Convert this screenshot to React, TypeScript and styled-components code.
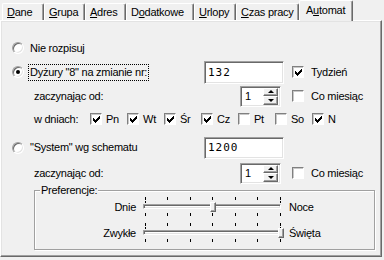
import React from 'react';
import styled, { createGlobalStyle } from 'styled-components';

const GlobalStyle = createGlobalStyle`
  html, body {
    margin: 0;
    padding: 0;
    background: #f0f0f0;
  }
  body {
    font-family: "Liberation Sans", Arial, sans-serif;
    font-size: 11px;
    letter-spacing: -0.25px;
    color: #000;
  }
`;

const Window = styled.div`
  width: 384px;
  height: 260px;
  background: #f0f0f0;
  overflow: hidden;
`;

const TabStrip = styled.div`
  display: flex;
  align-items: flex-end;
  height: 20px;
  padding-left: 2px;
  position: relative;
  z-index: 2;
`;

const Tab = styled.div<{ $w: number; $active?: boolean }>`
  box-sizing: border-box;
  width: ${p => p.$w}px;
  height: ${p => (p.$active ? 21 : 17)}px;
  margin-bottom: ${p => (p.$active ? -1 : 0)}px;
  padding: ${p => (p.$active ? '3px 0 0 6px' : '2px 0 0 4px')};
  background: #f0f0f0;
  border-top: 1px solid #fff;
  border-left: 1px solid #fff;
  border-right: 1px solid #696969;
  box-shadow: inset -1px 0 #a0a0a0;
  border-radius: 2px 2px 0 0;
  white-space: nowrap;

  u {
    text-decoration: underline;
    text-underline-offset: 1px;
  }
`;

const Page = styled.div`
  box-sizing: border-box;
  width: 382px;
  height: 237px;
  border: 1px solid;
  border-color: #fff #696969 #696969 #fff;
  box-shadow: inset -1px -1px #a0a0a0, inset 1px 1px #e3e3e3;
  padding: 15px 0 0 11px;
  display: flex;
  flex-direction: column;
`;

const Row = styled.div<{ $h: number; $mt?: number }>`
  display: flex;
  align-items: center;
  height: ${p => p.$h}px;
  margin-top: ${p => p.$mt ?? 0}px;
`;

const RadioOption = styled.div<{ $w: number }>`
  display: flex;
  align-items: center;
  width: ${p => p.$w}px;
`;

const RadioCircle = styled.span<{ $on?: boolean }>`
  box-sizing: border-box;
  width: 12px;
  height: 12px;
  border-radius: 50%;
  border: 1px solid;
  border-color: #a0a0a0 #fff #fff #a0a0a0;
  box-shadow: inset 1px 1px #696969, inset -1px -1px #e3e3e3;
  background: #fff;
  display: flex;
  align-items: center;
  justify-content: center;

  &::after {
    content: '';
    display: ${p => (p.$on ? 'block' : 'none')};
    width: 4px;
    height: 4px;
    border-radius: 50%;
    background: #000;
  }
`;

const OptionText = styled.span<{ $focus?: boolean }>`
  margin-left: 4px;
  padding: 1px 1px 2px;
  border: 1px dotted ${p => (p.$focus ? '#000' : 'transparent')};
  line-height: 12px;
  white-space: nowrap;
`;

const IndentLabel = styled.span<{ $w: number }>`
  margin-left: 22px;
  width: ${p => p.$w}px;
  white-space: nowrap;
`;

const TextField = styled.div<{ $h: number }>`
  box-sizing: border-box;
  width: 80px;
  height: ${p => p.$h}px;
  background: #fff;
  border: 1px solid;
  border-color: #a0a0a0 #fff #fff #a0a0a0;
  box-shadow: inset 1px 1px #696969, inset -1px -1px #e3e3e3;
  padding-left: 3px;
  display: flex;
  align-items: center;
  font-family: "DejaVu Sans Mono", "Liberation Mono", monospace;
  font-size: 11px;
  letter-spacing: 1px;
`;

const Spin = styled.div`
  box-sizing: border-box;
  width: 41px;
  height: 21px;
  background: #fff;
  border: 1px solid;
  border-color: #a0a0a0 #fff #fff #a0a0a0;
  box-shadow: inset 1px 1px #696969, inset -1px -1px #e3e3e3;
  display: flex;
  align-items: center;
  justify-content: space-between;
  padding: 2px 2px 2px 4px;
`;

const SpinButtons = styled.div`
  display: flex;
  flex-direction: column;
  width: 15px;
  height: 17px;
`;

const SpinButton = styled.div<{ $down?: boolean }>`
  flex: 1;
  box-sizing: border-box;
  background: #f0f0f0;
  border: 1px solid;
  border-color: #fff #696969 #696969 #fff;
  box-shadow: inset -1px -1px #a0a0a0;
  display: flex;
  align-items: center;
  justify-content: center;

  &::after {
    content: '';
    width: 0;
    height: 0;
    border-left: 3px solid transparent;
    border-right: 3px solid transparent;
    ${p => (p.$down ? 'border-top: 3px solid #000;' : 'border-bottom: 3px solid #000;')}
  }
`;

const CheckItem = styled.div<{ $ml?: number; $w?: number; $gap: number }>`
  display: flex;
  align-items: center;
  gap: ${p => p.$gap}px;
  margin-left: ${p => p.$ml ?? 0}px;
  width: ${p => (p.$w ? `${p.$w}px` : 'auto')};
  white-space: nowrap;
`;

const Box = styled.span`
  box-sizing: border-box;
  width: 12px;
  height: 12px;
  background: #fff;
  border: 1px solid;
  border-color: #808080 #fff #fff #808080;
  box-shadow: inset 1px 1px #c8c8c8;
  display: flex;
  align-items: center;
  justify-content: center;
  flex-shrink: 0;
`;

const GroupBox = styled.div`
  position: relative;
  box-sizing: border-box;
  width: 341px;
  height: 60px;
  margin: 5px 0 0 22px;
  border: 1px solid #a0a0a0;
  box-shadow: inset 1px 1px #fff, 1px 1px #fff;
  padding-top: 5px;
  display: flex;
  flex-direction: column;
  gap: 4px;
`;

const Legend = styled.span`
  position: absolute;
  top: -7px;
  left: 5px;
  padding: 0 1px;
  background: #f0f0f0;
  line-height: 13px;
`;

const SliderRow = styled.div`
  display: flex;
  align-items: center;
  height: 22px;
`;

const SliderLabel = styled.span<{ $right?: boolean }>`
  width: ${p => (p.$right ? 'auto' : '101px')};
  text-align: ${p => (p.$right ? 'left' : 'right')};
  margin-left: ${p => (p.$right ? 6 : 0)}px;
  white-space: nowrap;
`;

const SliderBox = styled.div`
  position: relative;
  width: 141px;
  height: 22px;
  margin-left: 6px;
`;

const TickLayer = styled.svg`
  position: absolute;
  left: 0;
  top: 0;
`;

const Track = styled.div`
  position: absolute;
  left: 1px;
  right: 2px;
  top: 8px;
  height: 5px;
  box-sizing: border-box;
  border: 1px solid;
  border-color: #a0a0a0 #fff #fff #a0a0a0;
  box-shadow: inset 1px 1px #696969, inset -1px -1px #e3e3e3;
  background: #fff;
`;

const Thumb = styled.div`
  position: absolute;
  top: 6px;
  width: 6px;
  height: 10px;
  box-sizing: border-box;
  background: #f0f0f0;
  border: 1px solid;
  border-color: #fff #696969 #696969 #fff;
  box-shadow: inset -1px -1px #a0a0a0;
`;

const Check = () => (
  <svg width="7" height="7" viewBox="0 0 7 7" shapeRendering="crispEdges">
    {[2, 3, 4, 3, 2, 1, 0].map((y, x) => (
      <rect key={x} x={x} y={y} width="1" height="3" fill="#000" />
    ))}
  </svg>
);

const CheckBox = ({ checked, label, gap, ml, w }: { checked?: boolean; label: string; gap: number; ml?: number; w?: number }) => (
  <CheckItem $gap={gap} $ml={ml} $w={w}>
    <Box>{checked && <Check />}</Box>
    {label}
  </CheckItem>
);

const SpinEdit = ({ value }: { value: string }) => (
  <Spin>
    <span>{value}</span>
    <SpinButtons>
      <SpinButton />
      <SpinButton $down />
    </SpinButtons>
  </Spin>
);

const TICKS = 7;
const tickX = (i: number) => Math.round(3 + i * 22.45);

const Slider = ({ value }: { value: number }) => (
  <SliderBox>
    <TickLayer width="141" height="22" shapeRendering="crispEdges">
      {Array.from({ length: TICKS }).map((_, i) => {
        const x = tickX(i) + 0.5;
        const end = i === 0 || i === TICKS - 1;
        return (
          <g key={i} stroke="#000" strokeWidth="1">
            <line x1={x} y1={1} x2={x} y2={4} />
            {end && <line x1={x} y1={5} x2={x} y2={7} />}
            <line x1={x} y1={17} x2={x} y2={20} />
          </g>
        );
      })}
    </TickLayer>
    <Track />
    <Thumb style={{ left: tickX(value) - 2 }} />
  </SliderBox>
);

const days = [
  { label: 'Pn', on: true },
  { label: 'Wt', on: true },
  { label: 'Śr', on: true },
  { label: 'Cz', on: true },
  { label: 'Pt', on: false },
  { label: 'So', on: false },
  { label: 'N', on: true },
];

export default function App() {
  return (
    <Window>
      <GlobalStyle />
      <TabStrip>
        <Tab $w={42}><u>D</u>ane</Tab>
        <Tab $w={41}><u>G</u>rupa</Tab>
        <Tab $w={41}><u>A</u>dres</Tab>
        <Tab $w={68}>D<u>o</u>datkowe</Tab>
        <Tab $w={42}><u>U</u>rlopy</Tab>
        <Tab $w={63}><u>C</u>zas pracy</Tab>
        <Tab $w={54} $active>A<u>u</u>tomat</Tab>
      </TabStrip>
      <Page>
        <Row $h={24}>
          <RadioOption $w={192}>
            <RadioCircle />
            <OptionText>Nie rozpisuj</OptionText>
          </RadioOption>
        </Row>
        <Row $h={24}>
          <RadioOption $w={192}>
            <RadioCircle $on />
            <OptionText $focus>Dyżury "8" na zmianie nr:</OptionText>
          </RadioOption>
          <TextField $h={23}>132</TextField>
          <CheckBox checked label="Tydzień" gap={7} ml={8} />
        </Row>
        <Row $h={24}>
          <IndentLabel $w={206}>zaczynając od:</IndentLabel>
          <SpinEdit value="1" />
          <CheckBox label="Co miesiąc" gap={7} ml={11} />
        </Row>
        <Row $h={22}>
          <IndentLabel $w={56}>w dniach:</IndentLabel>
          {days.map(d => (
            <CheckBox key={d.label} checked={d.on} label={d.label} gap={4} w={37} />
          ))}
        </Row>
        <Row $h={23} $mt={6}>
          <RadioOption $w={192}>
            <RadioCircle />
            <OptionText>"System" wg schematu</OptionText>
          </RadioOption>
          <TextField $h={22}>1200</TextField>
        </Row>
        <Row $h={24} $mt={2}>
          <IndentLabel $w={206}>zaczynając od:</IndentLabel>
          <SpinEdit value="1" />
          <CheckBox label="Co miesiąc" gap={7} ml={11} />
        </Row>
        <GroupBox>
          <Legend>Preferencje:</Legend>
          <SliderRow>
            <SliderLabel>Dnie</SliderLabel>
            <Slider value={3} />
            <SliderLabel $right>Noce</SliderLabel>
          </SliderRow>
          <SliderRow>
            <SliderLabel>Zwykłe</SliderLabel>
            <Slider value={6} />
            <SliderLabel $right>Święta</SliderLabel>
          </SliderRow>
        </GroupBox>
      </Page>
    </Window>
  );
}
